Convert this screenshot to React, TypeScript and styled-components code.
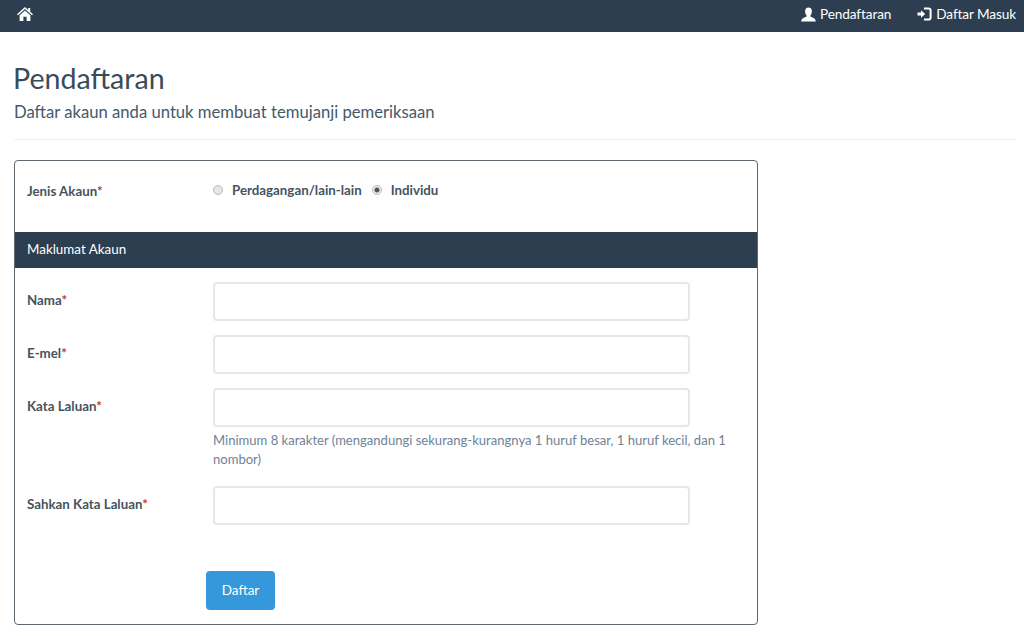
import styled, { createGlobalStyle } from 'styled-components';

const GlobalStyle = createGlobalStyle`
  html, body {
    margin: 0;
    background: #fff;
    font-family: 'Lato', sans-serif;
    color: #2c3e50;
  }
  * { box-sizing: border-box; }
`;

const fields = [
  { label: 'Nama', gap: 14 },
  { label: 'E-mel', gap: 14 },
  {
    label: 'Kata Laluan',
    gap: 17,
    help: 'Minimum 8 karakter (mengandungi sekurang-kurangnya 1 huruf besar, 1 huruf kecil, dan 1 nombor)',
  },
  { label: 'Sahkan Kata Laluan', gap: 0 },
];

const HomeIcon = () => (
  <svg width="16" height="14" viewBox="0 0 16 14" fill="#fff">
    <path d="M8 0L11.2 2.9V1H13.2V4.7L16 7.2L15 8.3L8 2.1L1 8.3L0 7.2Z" />
    <path d="M8 3.6L13.4 8.3V14H9.6V9.8H6.4V14H2.6V8.3Z" />
  </svg>
);

const UserIcon = () => (
  <svg width="15" height="15" viewBox="0 0 15 15" fill="#fff">
    <path d="M7.5 0.5C9.7 0.5 10.9 2 10.9 4.2C10.9 6 10.2 7.6 9.4 8.5V9.6C10.9 10.5 14.6 10.8 14.8 14.5H0.2C0.4 10.8 4.1 10.5 5.6 9.6V8.5C4.8 7.6 4.1 6 4.1 4.2C4.1 2 5.3 0.5 7.5 0.5Z" />
  </svg>
);

const LoginIcon = () => (
  <svg width="15" height="14" viewBox="0 0 15 14" fill="none">
    <path d="M0.5 5.6H4V3.2L8.2 7L4 10.8V8.4H0.5Z" fill="#fff" />
    <path d="M7 1.5H11.5C12.8 1.5 13.6 2.3 13.6 3.6V10.4C13.6 11.7 12.8 12.5 11.5 12.5H7" stroke="#fff" strokeWidth="2" />
  </svg>
);

export default function App() {
  return (
    <>
      <GlobalStyle />
      <Navbar>
        <HomeLink>
          <HomeIcon />
        </HomeLink>
        <NavLinks>
          <NavLink>
            <UserIcon />
            Pendaftaran
          </NavLink>
          <NavLink>
            <LoginIcon />
            Daftar Masuk
          </NavLink>
        </NavLinks>
      </Navbar>
      <Page>
        <Title>Pendaftaran</Title>
        <Subtitle>Daftar akaun anda untuk membuat temujanji pemeriksaan</Subtitle>
        <Divider />
        <Card>
          <TypeRow>
            <Label>
              Jenis Akaun<Star>*</Star>
            </Label>
            <RadioGroup>
              <Radio />
              <RadioText>Perdagangan/lain-lain</RadioText>
              <Radio checked />
              <RadioText>Individu</RadioText>
            </RadioGroup>
          </TypeRow>
          <SectionBar>Maklumat Akaun</SectionBar>
          <Fields>
            {fields.map((f) => (
              <FieldRow key={f.label} $gap={f.gap}>
                <Label>
                  {f.label}
                  <Star>*</Star>
                </Label>
                <div>
                  <Input />
                  {f.help && <Help>{f.help}</Help>}
                </div>
              </FieldRow>
            ))}
          </Fields>
          <Actions>
            <Button>Daftar</Button>
          </Actions>
        </Card>
      </Page>
    </>
  );
}

const Navbar = styled.nav`
  display: flex;
  justify-content: space-between;
  align-items: center;
  height: 32px;
  padding: 0 8px 4px 17px;
  background: #2c3e50;
  color: #fff;
`;

const HomeLink = styled.span`
  display: flex;
`;

const NavLinks = styled.div`
  display: flex;
  gap: 26px;
`;

const NavLink = styled.span`
  display: flex;
  align-items: center;
  gap: 4px;
  font-size: 13.6px;
  letter-spacing: -0.1px;

  svg {
    flex: none;
  }
`;

const Page = styled.main`
  padding: 0 8px 0 14px;
`;

const Title = styled.h1`
  margin: 28px 0 0 -1px;
  font-size: 28.6px;
  line-height: 36px;
  font-weight: 400;
  color: #3a4b5a;
`;

const Subtitle = styled.p`
  margin: 5px 0 0;
  font-size: 16.65px;
  line-height: 22px;
  color: #46596b;
`;

const Divider = styled.hr`
  margin: 16px 0 20px;
  border: 0;
  border-top: 1px solid #ecf0f1;
`;

const Card = styled.section`
  width: 744px;
  height: 465px;
  border: 1px solid #5d6870;
  border-radius: 4px;
`;

const TypeRow = styled.div`
  display: grid;
  grid-template-columns: 186px 1fr;
  height: 71px;
  padding: 21px 0 0 12px;
`;

const Label = styled.label`
  font-size: 13.3px;
  line-height: 18px;
  font-weight: 700;
  color: #46535f;
`;

const Star = styled.span`
  color: #c0392b;
`;

const RadioGroup = styled.div`
  display: flex;
  align-items: flex-start;
  margin-top: -1px;
  font-size: 13.3px;
  line-height: 18px;
`;

const Radio = styled.span<{ checked?: boolean }>`
  width: 10px;
  height: 10px;
  margin: 4px 9px 0 0;
  border-radius: 50%;
  border: 1px solid #b4b9bd;
  background: ${({ checked }) =>
    checked ? 'radial-gradient(circle, #555 0 2px, #eceeef 3px)' : '#e4e6e8'};
`;

const RadioText = styled.span`
  margin-right: 10px;
  font-weight: 700;
  color: #46535f;
`;

const SectionBar = styled.div`
  height: 36px;
  padding: 0 12px;
  background: #2c3e50;
  color: #fff;
  font-size: 13.4px;
  line-height: 35px;
`;

const Fields = styled.div`
  padding-top: 14px;
`;

const FieldRow = styled.div<{ $gap: number }>`
  display: grid;
  grid-template-columns: 186px 477px;
  padding-left: 12px;
  margin-bottom: ${({ $gap }) => $gap}px;

  ${Label} {
    padding-top: 9px;
  }
`;

const Input = styled.input`
  display: block;
  width: 477px;
  height: 39px;
  background: #fff;
  border: 2px solid #e1e8ee;
  border-radius: 4px;
  outline: none;
`;

const Help = styled.p`
  width: 530px;
  margin: 4px 0 0;
  font-size: 13.05px;
  line-height: 19px;
  color: #6f8296;
`;

const Actions = styled.div`
  padding: 46px 0 0 191px;
`;

const Button = styled.button`
  width: 69px;
  height: 39px;
  border: 0;
  border-radius: 4px;
  background: #3498db;
  color: #fff;
  font-family: 'Lato', sans-serif;
  font-size: 13.5px;
  padding: 0 0 2px;
`;
